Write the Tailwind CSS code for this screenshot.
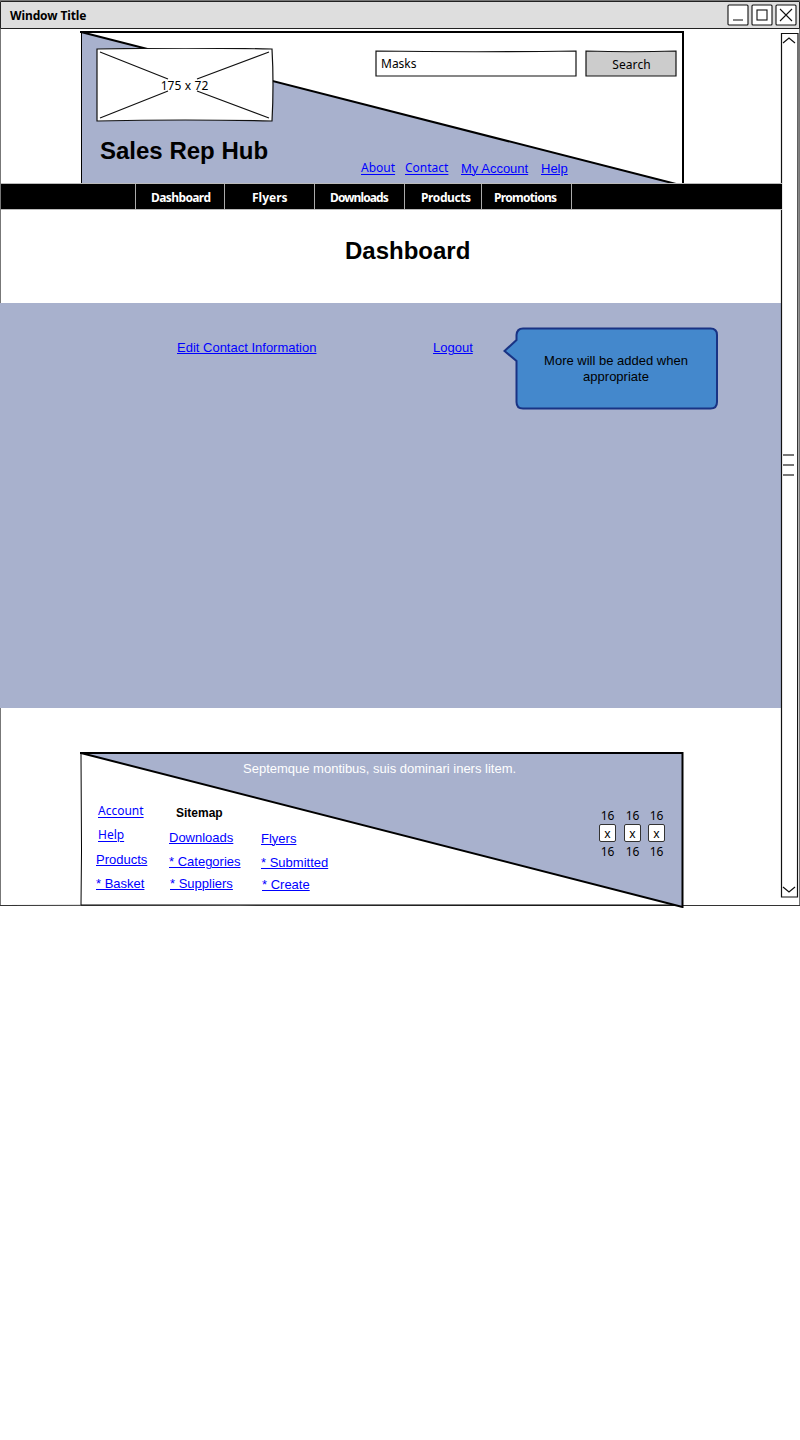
<!DOCTYPE html>
<html lang="en">
<head>
<meta charset="utf-8">
<title>Sales Rep Hub</title>
<script src="https://cdn.jsdelivr.net/npm/@tailwindcss/browser@4"></script>
</head>
<body class="bg-white text-black font-['Liberation_Sans',Arial,sans-serif] text-[13px] leading-4">
<div class="relative w-[800px] h-[908px] whitespace-nowrap">
  <!-- window frame -->
  <svg class="absolute inset-0" width="800" height="908" fill="none">
    <path d="M.5 2V905" stroke="#777"/>
    <path d="M799.5 2V905" stroke="#777"/>
    <path d="M0 905.5L240 905L500 905.5H800" stroke="#333" stroke-width="1.2"/>
  </svg>

  <!-- title bar -->
  <header class="relative h-[30px] flex items-start">
    <svg class="absolute inset-0" width="800" height="30" fill="none">
      <path d="M.5 1.5H799.5V28.5H.5Z" fill="#dedede" stroke="#222"/>
      <path d="M0 .5H800" stroke="#777"/>
    </svg>
    <div class="relative ml-[10px] mt-2 w-[717px] text-[12px] font-bold tracking-[-0.12px] font-['Comic_Sans_MS','Noto_Sans',sans-serif]">Window Title</div>
    <svg class="relative mt-1" width="72" height="23" fill="none" stroke="#111" stroke-width="1.1">
      <g fill="#fff"><rect x="1" y="1" width="20" height="20" rx="1"/><rect x="25" y="1" width="20" height="20" rx="1"/><rect x="49" y="1" width="20" height="20" rx="1"/></g>
      <path d="M6 16H16" stroke="#666" stroke-width="1.6"/>
      <rect x="30" y="6" width="10" height="10"/>
      <path d="M53 5L65 17M65 5L53 17"/>
    </svg>
  </header>

  <div class="relative flex h-[878px]">
    <main class="w-[782px] flex flex-col">
      <!-- banner -->
      <section class="relative h-[153px]">
        <svg class="absolute inset-0" width="782" height="154" fill="none" stroke="#000">
          <path d="M81.5 2V153.5H676Z" fill="#a8b1cd" stroke="none"/>
          <path d="M81.5 2V153"/>
          <path d="M80 2H683V153" stroke-width="2"/>
          <path d="M81 2L676 154" stroke-width="2"/>
        </svg>
        <div class="relative flex h-[106px] items-start">
          <div class="relative ml-24 mt-[18px] w-[178px] h-[75px] flex justify-center">
            <svg class="absolute inset-0" width="178" height="75" fill="none" stroke="#111" stroke-width="1.2">
              <path d="M1 1Q90-.5 176 1Q178 36 176 73Q90 71 1 73Z" fill="#fff"/>
              <path d="M4 4L72 31M173 4L101 31M4 70L72 43M173 70L101 43"/>
            </svg>
            <span class="relative mt-[30px] ml-[-1px] text-[12px] tracking-[0.1px] font-['Comic_Sans_MS','Noto_Sans',sans-serif]">175 x 72</span>
          </div>
          <div class="relative ml-[101px] mt-5 w-[203px] h-[28px]">
            <svg class="absolute inset-0" width="203" height="28"><path d="M1 1Q100 2.5 201 1V26H1Z" fill="#fff" stroke="#111" stroke-width="1.2"/></svg>
            <span class="relative block pl-[6px] pt-[6px] text-[12px] font-['Comic_Sans_MS','Noto_Sans',sans-serif]">Masks</span>
          </div>
          <button class="relative ml-[7px] mt-5 w-[93px] h-[28px] pt-[2px]">
            <svg class="absolute inset-0" width="93" height="28"><path d="M1 1Q46 2.5 91 1V26H1Z" fill="#ccc" stroke="#111" stroke-width="1.2"/></svg>
            <span class="relative text-[12px] tracking-[0.1px] font-['Comic_Sans_MS','Noto_Sans',sans-serif]">Search</span>
          </button>
        </div>
        <div class="relative flex items-start">
          <h1 class="ml-[100px] mt-[1px] w-[261px] text-2xl leading-7 font-bold">Sales Rep Hub</h1>
          <nav class="flex mt-[25px] text-[#00f]">
            <a class="w-[44px] text-[12px] underline underline-offset-2 decoration-1 font-['Comic_Sans_MS','Noto_Sans',sans-serif] mt-[-1px]">About</a>
            <a class="w-[56px] text-[12px] underline underline-offset-2 decoration-1 font-['Comic_Sans_MS','Noto_Sans',sans-serif] mt-[-1px]">Contact</a>
            <a class="w-[80px] underline underline-offset-1 decoration-1">My Account</a>
            <a class="underline underline-offset-1 decoration-1">Help</a>
          </nav>
        </div>
      </section>

      <!-- main menu -->
      <nav class="relative ml-px h-[27px] flex bg-black border-y border-[#bbb] pl-[134px] text-white text-[12px] font-bold font-['Comic_Sans_MS','Noto_Sans',sans-serif] leading-[27px]">
        <a class="w-[89px] border-l border-[#aaa] pl-[15px] tracking-[-0.6px]">Dashboard</a>
        <a class="w-[90px] border-l border-[#aaa] pl-[27px]">Flyers</a>
        <a class="w-[90px] border-l border-[#aaa] pl-[15px] tracking-[-0.9px]">Downloads</a>
        <a class="w-[77px] border-l border-[#aaa] pl-[16px] tracking-[-0.4px]">Products</a>
        <a class="w-[91px] border-x border-[#aaa] pl-[12px] tracking-[-0.7px]">Promotions</a>
      </nav>

      <div class="h-[93px] pt-[27px] pl-[345px]"><h2 class="text-2xl leading-7 font-bold">Dashboard</h2></div>

      <!-- dashboard panel -->
      <section class="h-[405px] w-[781px] bg-[#a8b1cd] flex items-start">
        <a class="ml-[177px] mt-[37px] w-64 text-[#00f] underline underline-offset-1 decoration-1">Edit Contact Information</a>
        <a class="mt-[37px] w-[70px] text-[#00f] underline underline-offset-1 decoration-1">Logout</a>
        <div class="relative mt-6 w-[216px] h-[84px] pl-[10px] pt-[26px] text-center">
          <svg class="absolute inset-0" width="216" height="84"><path d="M13.5 8Q14 1.500 20 1.500H207.500Q214 1.500 214 8V75Q214 81.500 207.500 81.500H20Q13.5 81.500 13.5 75V34L1.500 24L13.5 13Z" fill="#4488cc" stroke="#193384" stroke-width="2"/></svg>
          <p class="relative">More will be added when<br>appropriate</p>
        </div>
      </section>

      <!-- footer -->
      <footer class="relative mt-[43px] h-[157px]">
        <svg class="absolute inset-0" width="782" height="157" fill="none" stroke="#000">
          <path d="M81 2L81.500 100L81 154H683" fill="#fff"/>
          <path d="M81 2H682.500V156Z" fill="#a8b1cd" stroke-width="2"/>
          <path d="M80 2H84" stroke-width="2"/>
        </svg>
        <p class="relative pt-[10px] pl-[243px] text-white">Septemque montibus, suis dominari iners litem.</p>
        <div class="relative flex items-start pl-24 text-[#00f]">
          <div class="w-[73px] flex flex-col pt-[26px]">
            <a class="pl-[2px] h-6 text-[12px] underline underline-offset-2 decoration-1 font-['Comic_Sans_MS','Noto_Sans',sans-serif]">Account</a>
            <a class="pl-[2px] h-[25px] text-[12px] underline underline-offset-2 decoration-1 font-['Comic_Sans_MS','Noto_Sans',sans-serif]">Help</a>
            <a class="h-6 underline underline-offset-1 decoration-1">Products</a>
            <a class="underline underline-offset-1 decoration-1">* Basket</a>
          </div>
          <div class="w-[92px] flex flex-col pt-[28px]">
            <strong class="h-[25px] pl-[7px] text-[12px] text-black">Sitemap</strong>
            <a class="h-6 underline underline-offset-1 decoration-1">Downloads</a>
            <a class="h-[22px] underline underline-offset-1 decoration-1">* Categories</a>
            <a class="pl-px underline underline-offset-1 decoration-1">* Suppliers</a>
          </div>
          <div class="w-[338px] flex flex-col pt-[54px]">
            <a class="h-6 underline underline-offset-1 decoration-1">Flyers</a>
            <a class="h-[22px] underline underline-offset-1 decoration-1">* Submitted</a>
            <a class="pl-px underline underline-offset-1 decoration-1">* Create</a>
          </div>
          <div class="flex gap-[8px] pt-[31px] text-black text-[12px] text-center font-['Comic_Sans_MS','Noto_Sans',sans-serif]">
            <div class="w-[17px]">16<div class="h-[18px] mb-[2px] bg-white border border-[#333] rounded-xs leading-[18px]">x</div>16</div>
            <div class="w-[17px]">16<div class="h-[18px] mb-[2px] bg-white border border-[#333] rounded-xs leading-[18px]">x</div>16</div>
            <div class="w-[17px] -ml-px">16<div class="h-[18px] mb-[2px] bg-white border border-[#333] rounded-xs leading-[18px]">x</div>16</div>
          </div>
        </div>
      </footer>
    </main>

    <!-- scrollbar -->
    <svg class="-ml-[2px]" width="19" height="878" fill="none" stroke="#111">
      <path d="M1.500 3.500H18Q17 300 17.500 867H1.500V180Z" stroke-width="1.200"/>
      <path d="M3 13L9 8L15 13M3 857L9 862L15 857" stroke-width="1.200"/>
      <path d="M3 425H14M3 435H14M3 445H14" stroke="#777" stroke-width="1.800"/>
    </svg>
  </div>
</div>
</body>
</html>
